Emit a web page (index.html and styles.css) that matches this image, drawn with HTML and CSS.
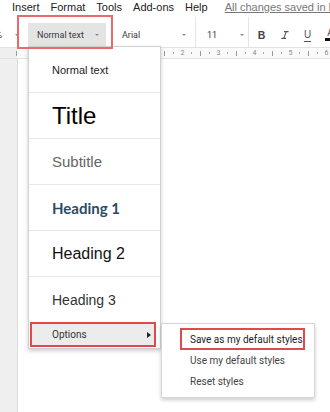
FILE: index.html
```html
<!DOCTYPE html>
<html>
<head>
<meta charset="utf-8">
<link rel="stylesheet" href="styles.css">
</head>
<body>
<div class="app">
  <nav class="menubar">
    <span>Insert</span><span>Format</span><span>Tools</span><span>Add-ons</span><span>Help</span>
    <span class="saved">All changes saved in Drive</span>
  </nav>

  <div class="toolbar">
    <div class="tb-zoom"><span class="tb-text">100%</span><span class="caret"></span></div>
    <div class="tb-style"><span class="tb-text">Normal text</span><span class="caret"></span></div>
    <div class="tb-font"><span class="tb-text">Arial</span><span class="caret"></span></div>
    <div class="sep"></div>
    <div class="tb-size"><span class="tb-text">11</span><span class="caret"></span></div>
    <div class="sep sep-b"></div>
    <div class="fmt"><span class="fmt-b">B</span></div>
    <div class="fmt"><svg width="8" height="8" viewBox="0 0 8 8"><path d="M3 .6h4.6M.4 7.4H5M5.3 .6 2.7 7.4" stroke="#555" stroke-width="1.1" fill="none"/></svg></div>
    <div class="fmt"><span class="fmt-u">U</span></div>
    <div class="fmt fmt-a"><span class="fmt-a-letter">A</span><span class="fmt-a-bar"></span></div>
    <div class="annot annot-style"></div>
  </div>

  <div class="ruler">
    <div class="ruler-gutter"><span class="tick"></span></div>
    <div class="ruler-track">
      <span class="rm"><i class="tick"></i></span><span class="rm"><i class="dot"></i></span>
      <span class="rm">2</span><span class="rm"><i class="dot"></i></span>
      <span class="rm"><i class="tick"></i></span><span class="rm"><i class="dot"></i></span>
      <span class="rm">3</span><span class="rm"><i class="dot"></i></span>
      <span class="rm"><i class="tick"></i></span><span class="rm"><i class="dot"></i></span>
      <span class="rm">4</span><span class="rm"><i class="dot"></i></span>
      <span class="rm"><i class="tick"></i></span><span class="rm"><i class="dot"></i></span>
      <span class="rm">5</span><span class="rm"><i class="dot"></i></span>
      <span class="rm"><i class="tick"></i></span><span class="rm"><i class="dot"></i></span>
      <span class="rm">6</span><span class="rm"><i class="dot"></i></span>
    </div>
  </div>

  <div class="workspace">
    <div class="gutter"></div>
    <div class="page"></div>
  </div>

  <div class="style-menu">
    <div class="sm-item sm-normal">Normal text</div>
    <div class="sm-item sm-title">Title</div>
    <div class="sm-item sm-subtitle">Subtitle</div>
    <div class="sm-item sm-h1">Heading 1</div>
    <div class="sm-item sm-h2">Heading 2</div>
    <div class="sm-item sm-h3">Heading 3</div>
    <div class="sm-options"><span>Options</span><span class="tri-right"></span></div>
  </div>

  <div class="submenu">
    <div class="sub-item active">Save as my default styles</div>
    <div class="sub-item">Use my default styles</div>
    <div class="sub-item">Reset styles</div>
  </div>
</div>
</body>
</html>
```

FILE: styles.css
```css
body {
  margin: 0;
}

.app {
  position: relative;
  width: 330px;
  height: 412px;
  overflow: hidden;
  background: #fff;
  font-family: Roboto, "Liberation Sans", sans-serif;
}

/* menu bar */
.menubar {
  display: flex;
  gap: 11px;
  padding-left: 12px;
  height: 17px;
  font: 11px/15px "Liberation Sans", Arial, sans-serif;
  color: #222;
  white-space: nowrap;
}

.menubar .saved {
  margin-left: 6px;
  color: #777;
  text-decoration: underline;
}

/* toolbar */
.toolbar {
  position: relative;
  display: flex;
  align-items: center;
  height: 31px;
  box-sizing: border-box;
  padding-top: 5px;
  border-bottom: 1px solid #e3e3e3;
}

.tb-text {
  font: 9px Roboto, sans-serif;
  color: #3a3a3a;
  white-space: nowrap;
}

.caret {
  width: 0;
  height: 0;
  border-left: 2px solid transparent;
  border-right: 2px solid transparent;
  border-top: 2px solid #8a8a8a;
}

.tb-zoom {
  width: 28px;
  box-sizing: border-box;
  padding-right: 9px;
  display: flex;
  align-items: center;
  justify-content: flex-end;
  gap: 13px;
  flex: none;
}

.tb-style {
  flex: none;
  width: 78px;
  height: 24px;
  align-self: flex-end;
  box-sizing: border-box;
  background: #e4e4e4;
  display: flex;
  align-items: center;
  justify-content: space-between;
  padding: 0 7px 0 9px;
}

.tb-font {
  flex: none;
  margin-left: 16px;
  width: 64px;
  display: flex;
  align-items: center;
  justify-content: space-between;
}

.tb-size {
  flex: none;
  margin-left: 11px;
  width: 37px;
  display: flex;
  align-items: center;
  justify-content: space-between;
}

.sep {
  flex: none;
  width: 1px;
  height: 30px;
  align-self: flex-end;
  background: #e6e6e6;
  margin-left: 9px;
}

.sep-b {
  margin-left: 4px;
}

.fmt {
  flex: none;
  width: 23px;
  display: flex;
  justify-content: center;
  align-items: center;
}

.sep + .fmt {
  margin-left: 1px;
}

.fmt-b {
  font: bold 10.5px "Liberation Sans", Arial, sans-serif;
  color: #444;
}

.fmt-u {
  font: 10px "Liberation Sans", Arial, sans-serif;
  color: #555;
  text-decoration: underline;
  text-underline-offset: 3px;
}

.fmt-a {
  flex-direction: column;
}

.fmt-a-letter {
  font: 10px/9px "Liberation Sans", Arial, sans-serif;
  color: #555;
}

.fmt-a-bar {
  width: 12px;
  height: 3px;
  margin-top: 1px;
  background: #111;
}

/* annotation boxes */
.annot {
  position: absolute;
  box-sizing: border-box;
  border: 2px solid #e86a6a;
  z-index: 5;
}

.annot-style {
  left: 17px;
  top: -2px;
  width: 96px;
  height: 34px;
}

/* ruler */
.ruler {
  display: flex;
  height: 11px;
  box-sizing: border-box;
  border-bottom: 1px solid #e2e2e2;
  background: #fafafa;
}

.ruler-gutter {
  width: 17px;
  flex: none;
  background: #efefef;
  display: flex;
  justify-content: flex-end;
  align-items: center;
}

.ruler-track {
  flex: 1;
  display: flex;
  align-items: center;
  padding-left: 143px;
}

.rm {
  flex: none;
  width: 9px;
  height: 10px;
  display: flex;
  align-items: center;
  justify-content: center;
  font: 7px Roboto, sans-serif;
  color: #888;
}

.tick {
  display: block;
  width: 1px;
  height: 5px;
  background: #999;
}

.dot {
  display: block;
  width: 1px;
  height: 2px;
  background: #aaa;
}

/* workspace */
.workspace {
  display: flex;
  height: 353px;
}

.gutter {
  width: 17px;
  flex: none;
  background: #efefef;
}

.page {
  flex: 1;
  background: #fff;
  border-left: 1px solid #dcdcdc;
}

/* style dropdown */
.style-menu {
  position: absolute;
  left: 28px;
  top: 46px;
  width: 133px;
  box-sizing: border-box;
  background: #fff;
  border: 1px solid rgba(0, 0, 0, 0.18);
  box-shadow: 0 2px 4px rgba(0, 0, 0, 0.2);
  padding-bottom: 1px;
  z-index: 3;
}

.sm-item {
  height: 46px;
  box-sizing: border-box;
  border-bottom: 1px solid #e8e8e8;
  display: flex;
  align-items: center;
  padding-left: 23px;
  font-family: "Liberation Sans", Arial, sans-serif;
  color: #222;
  white-space: nowrap;
}

.sm-normal { font-size: 11px; }
.sm-title { font-size: 24px; color: #000; }
.sm-subtitle { font-size: 15px; color: #666; }
.sm-h1 {
  font: bold 15px Lato, "Open Sans", sans-serif;
  color: #2b4a66;
}
.sm-h2 { font-size: 16px; color: #111; }
.sm-h3 {
  font-size: 14px;
  color: #333;
  height: 45px;
  border-bottom: none;
}

.sm-options {
  height: 25px;
  box-sizing: border-box;
  margin: 0 4px 0 1px;
  border: 2px solid #e14a4a;
  background: #ececec;
  display: flex;
  align-items: center;
  justify-content: space-between;
  padding: 0 3px 0 20px;
  font: 10px Roboto, sans-serif;
  color: #333;
}

.tri-right {
  width: 0;
  height: 0;
  border-left: 4px solid #222;
  border-top: 3px solid transparent;
  border-bottom: 3px solid transparent;
}

/* submenu */
.submenu {
  position: absolute;
  left: 161px;
  top: 323px;
  width: 154px;
  height: 75px;
  box-sizing: border-box;
  background: #fff;
  border: 1px solid rgba(0, 0, 0, 0.16);
  box-shadow: 0 2px 4px rgba(0, 0, 0, 0.2);
  padding-top: 4px;
  z-index: 4;
}

.sub-item {
  margin-left: 18px;
  width: 125px;
  height: 21px;
  box-sizing: border-box;
  border: 2px solid transparent;
  padding-left: 8px;
  display: flex;
  align-items: center;
  font: 10px Roboto, sans-serif;
  color: #444;
  white-space: nowrap;
}

.sub-item.active {
  height: 22px;
  border-color: #e14a4a;
  color: #222;
}
```
